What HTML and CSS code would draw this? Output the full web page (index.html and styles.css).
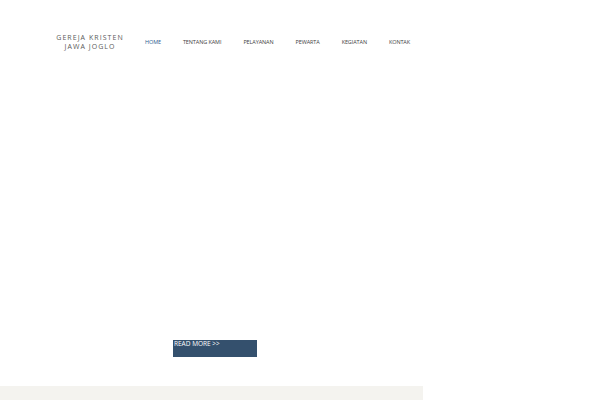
FILE: index.html
```html
<!DOCTYPE html>
<html>
<head>
<meta charset="utf-8">
<link rel="stylesheet" href="styles.css">
</head>
<body>
<div class="page">
  <header class="header">
    <div class="logo">
      <div class="logo-line">GEREJA KRISTEN</div>
      <div class="logo-line">JAWA JOGLO</div>
    </div>
    <nav class="nav">
      <a class="nav-item active">HOME</a>
      <a class="nav-item">TENTANG KAMI</a>
      <a class="nav-item">PELAYANAN</a>
      <a class="nav-item">PEWARTA</a>
      <a class="nav-item">KEGIATAN</a>
      <a class="nav-item">KONTAK</a>
    </nav>
  </header>
  <section class="hero">
    <a class="read-more">READ MORE &gt;&gt;</a>
  </section>
  <div class="band"></div>
</div>
</body>
</html>
```
FILE: styles.css
```css
html, body {
  margin: 0;
  padding: 0;
  background: #ffffff;
}
.page {
  width: 600px;
  height: 400px;
  overflow: hidden;
  font-family: "Open Sans", "Liberation Sans", sans-serif;
}
.header {
  display: flex;
  align-items: center;
  height: 84px;
  padding-left: 55px;
  box-sizing: border-box;
}
.logo {
  display: flex;
  flex-direction: column;
  align-items: center;
  width: 70px;
  color: #5a5a5a;
  font-family: "Open Sans", "Liberation Sans", sans-serif;
  font-weight: 400;
  font-size: 7px;
  letter-spacing: 1.05px;
  line-height: 9px;
  margin-top: -1px;
}
.logo-line {
  white-space: nowrap;
}
.nav {
  display: flex;
  gap: 22px;
  margin-left: 20px;
}
.nav-item {
  font-size: 5.5px;
  color: #444;
  letter-spacing: -0.1px;
  white-space: nowrap;
}
.nav-item.active {
  color: #2b5b8e;
}
.hero {
  height: 273px;
  padding-left: 173px;
  box-sizing: border-box;
  display: flex;
  flex-direction: column;
  justify-content: flex-end;
}
.read-more {
  display: block;
  width: 84px;
  height: 17px;
  background: #34506d;
  color: #fff;
  font-size: 6.5px;
  line-height: 8px;
  padding-left: 1px;
  box-sizing: border-box;
}
.band {
  margin-top: 29px;
  width: 423px;
  height: 14px;
  background: #f4f3ef;
}
```
